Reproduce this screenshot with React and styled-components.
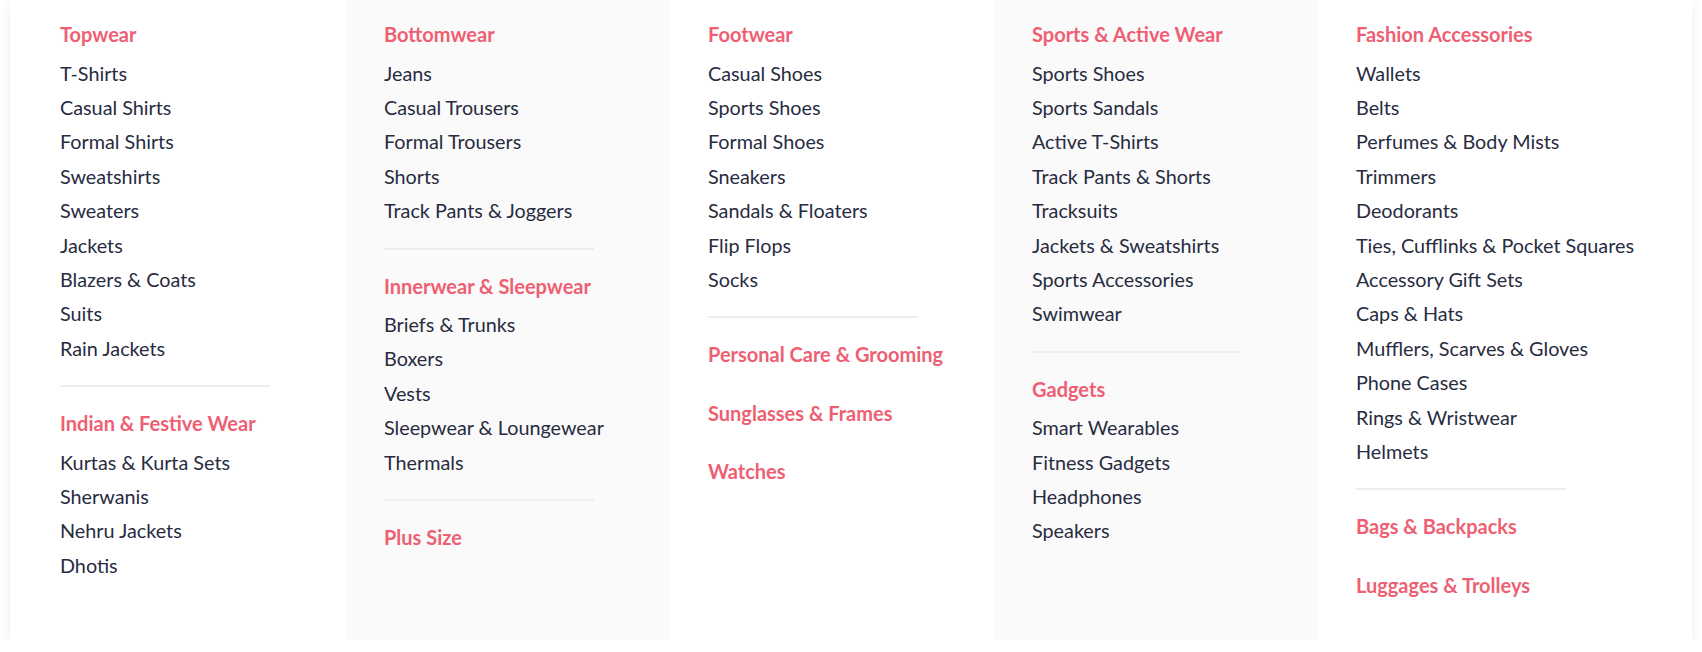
import React from 'react'
import styled, { createGlobalStyle } from 'styled-components'

const GlobalStyle = createGlobalStyle`
  body {
    margin: 0;
    background: #ffffff;
    font-family: Lato, "Liberation Sans", sans-serif;
  }
`

const Menu = styled.div`
  display: flex;
  margin: 0 10px;
  padding-left: 12px;
  height: 640px;
  background: #ffffff;
  box-shadow: 0 4px 12px 0 rgba(0, 0, 0, 0.08);
`

const Column = styled.ul`
  list-style: none;
  margin: 0;
  width: 324px;
  box-sizing: border-box;
  padding: 17px 38px 0;
  background: ${(p) => (p.$shaded ? '#fafafa' : '#ffffff')};
`

const Heading = styled.li`
  font-size: 20px;
  line-height: 34.5px;
  font-weight: 700;
  color: #ee5f73;
  margin-bottom: ${(p) => (p.$solo ? '24px' : '4px')};
  white-space: nowrap;
`

const Item = styled.li`
  font-size: 19.8px;
  line-height: 34.4px;
  color: #282c3f;
  white-space: nowrap;
`

const Divider = styled.li`
  width: 210px;
  height: 2px;
  background: #eeeeef;
  margin: 20px 0 19px;
`

const columns = [
  [
    { title: 'Topwear', items: ['T-Shirts', 'Casual Shirts', 'Formal Shirts', 'Sweatshirts', 'Sweaters', 'Jackets', 'Blazers & Coats', 'Suits', 'Rain Jackets'] },
    { title: 'Indian & Festive Wear', items: ['Kurtas & Kurta Sets', 'Sherwanis', 'Nehru Jackets', 'Dhotis'] },
  ],
  [
    { title: 'Bottomwear', items: ['Jeans', 'Casual Trousers', 'Formal Trousers', 'Shorts', 'Track Pants & Joggers'] },
    { title: 'Innerwear & Sleepwear', items: ['Briefs & Trunks', 'Boxers', 'Vests', 'Sleepwear & Loungewear', 'Thermals'] },
    { titles: ['Plus Size'] },
  ],
  [
    { title: 'Footwear', items: ['Casual Shoes', 'Sports Shoes', 'Formal Shoes', 'Sneakers', 'Sandals & Floaters', 'Flip Flops', 'Socks'] },
    { titles: ['Personal Care & Grooming', 'Sunglasses & Frames', 'Watches'] },
  ],
  [
    { title: 'Sports & Active Wear', items: ['Sports Shoes', 'Sports Sandals', 'Active T-Shirts', 'Track Pants & Shorts', 'Tracksuits', 'Jackets & Sweatshirts', 'Sports Accessories', 'Swimwear'] },
    { title: 'Gadgets', items: ['Smart Wearables', 'Fitness Gadgets', 'Headphones', 'Speakers'] },
  ],
  [
    { title: 'Fashion Accessories', items: ['Wallets', 'Belts', 'Perfumes & Body Mists', 'Trimmers', 'Deodorants', 'Ties, Cufflinks & Pocket Squares', 'Accessory Gift Sets', 'Caps & Hats', 'Mufflers, Scarves & Gloves', 'Phone Cases', 'Rings & Wristwear', 'Helmets'] },
    { titles: ['Bags & Backpacks', 'Luggages & Trolleys'] },
  ],
]

function Group({ group }) {
  if (group.titles) {
    return group.titles.map((t) => (
      <Heading key={t} $solo>
        {t}
      </Heading>
    ))
  }
  return (
    <>
      <Heading>{group.title}</Heading>
      {group.items.map((it) => (
        <Item key={it}>{it}</Item>
      ))}
    </>
  )
}

export default function App() {
  return (
    <>
      <GlobalStyle />
      <Menu>
        {columns.map((groups, ci) => (
          <Column key={ci} $shaded={ci % 2 === 1}>
            {groups.map((g, gi) => (
              <React.Fragment key={gi}>
                {gi > 0 && <Divider />}
                <Group group={g} />
              </React.Fragment>
            ))}
          </Column>
        ))}
      </Menu>
    </>
  )
}
